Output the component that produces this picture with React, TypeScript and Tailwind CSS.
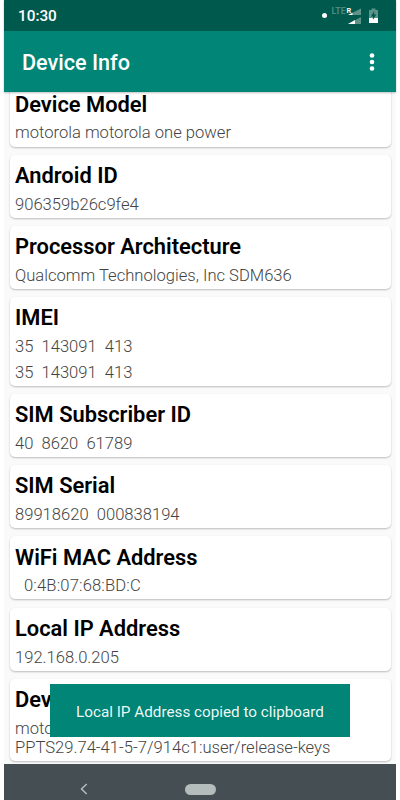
import { clsx } from "clsx";

type InfoItem = {
  title: string;
  lines: string[];
  cardClass?: string;
  bodyClass?: string;
};

const items: InfoItem[] = [
  { title: "Device Model", lines: ["motorola motorola one power"] },
  { title: "Android ID", lines: ["906359b26c9fe4"] },
  { title: "Processor Architecture", lines: ["Qualcomm Technologies, Inc SDM636"] },
  { title: "IMEI", lines: ["35  143091  413", "35  143091  413"], cardClass: "h-[88.4px]" },
  { title: "SIM Subscriber ID", lines: ["40  8620  61789"] },
  { title: "SIM Serial", lines: ["89918620  000838194"] },
  { title: "WiFi MAC Address", lines: ["0:4B:07:68:BD:C"], bodyClass: "pl-[9px] leading-[25.4px] tracking-[0.15px]" },
  { title: "Local IP Address", lines: ["192.168.0.205"] },
  {
    title: "Device Fingerprint",
    lines: ["motorola/chef/chef_sprout:9/", "PPTS29.74-41-5-7/914c1:user/release-keys"],
    cardClass: "h-[82px]",
    bodyClass: "pt-[3px] leading-[19.5px]",
  },
];

function InfoCard({ title, lines, cardClass = "h-[63px]", bodyClass = "leading-[25.4px]" }: InfoItem) {
  return (
    <div
      className={clsx(
        "shrink-0 rounded-[5px] bg-white px-[5.5px] pt-[6.2px] shadow-[0_1px_2px_rgba(0,0,0,0.25)]",
        cardClass,
      )}
    >
      <h2 className="text-[21.85px] leading-[30.8px] font-semibold text-black">{title}</h2>
      <div className={clsx("text-[16.6px] font-light whitespace-pre text-[#444]", bodyClass)}>
        {lines.map((line, i) => (
          <p key={i}>{line}</p>
        ))}
      </div>
    </div>
  );
}

function StatusIcons() {
  return (
    <svg width="80" height="31" viewBox="0 0 80 31" className="ml-auto">
      <circle cx="8.5" cy="15.5" r="2.5" fill="#fff" />
      <text x="15.5" y="14.4" fontSize="8.8" fontWeight="700" fill="#4d8a7f">
        LTE
      </text>
      <path d="M45 8.5V15H32z" fill="#5d9388" />
      <path d="M36.5 12.7V15H32z" fill="#fff" />
      <text x="30.5" y="12.6" fontSize="7.4" fontWeight="700" fill="#fff">
        R
      </text>
      <path d="M45 17V24H32z" fill="#5d9388" />
      <path d="M39 20V24H32z" fill="#fff" />
      <path d="M59.5 8.5V10H62v13h-9V10h2.500V8.500z" fill="#5d9388" />
      <path d="M53 18h9v5h-9z" fill="#fff" />
      <path d="M58.200 11l-3.300 5.600h2V20l3.300-5.600h-2z" fill="#00594d" />
    </svg>
  );
}

export default function App() {
  return (
    <div className="h-[800px] w-[400px] overflow-hidden bg-white px-1 font-['Roboto',sans-serif]">
      <div className="relative flex h-full flex-col bg-[#fafafa]">
        <header className="z-10 shrink-0 shadow-[0_1px_2px_rgba(0,0,0,0.25)]">
          <div className="flex h-[31px] items-center bg-[#00594d] pl-[14px]">
            <span className="pt-[2px] text-[15.3px] font-medium text-white">10:30</span>
            <StatusIcons />
          </div>
          <div className="flex h-[61px] items-center justify-between bg-[#008577] pr-[21px] pl-[18px]">
            <h1 className="pt-[3px] text-[21.6px] font-medium text-white">Device Info</h1>
            <svg width="6" height="20" viewBox="0 0 6 20" fill="#fff">
              <circle cx="3" cy="3.5" r="2.3" />
              <circle cx="3" cy="10" r="2.3" />
              <circle cx="3" cy="16.5" r="2.3" />
            </svg>
          </div>
        </header>
        <main className="-mt-[8.5px] flex min-h-0 flex-1 flex-col gap-[8.25px] overflow-hidden px-[5.5px]">
          {items.map((item) => (
            <InfoCard key={item.title} {...item} />
          ))}
        </main>
        <nav className="flex h-[36.5px] shrink-0 items-center bg-[#454e53] pt-[15px]">
          <svg width="8" height="12" viewBox="0 0 8 12" className="ml-[76px]">
            <path d="M6.7 1L1.5 6l5.2 5" fill="none" stroke="#b4bcbc" strokeWidth="1.5" />
          </svg>
          <div className="ml-[96.5px] h-[11px] w-[31px] rounded-full bg-[#b4bcbc]" />
        </nav>
        <div className="absolute top-[684px] left-[46px] z-20 flex h-[53px] w-[300px] items-center justify-center bg-[#008577] pt-[3px]">
          <span className="text-[15.25px] text-white/95">Local IP Address copied to clipboard</span>
        </div>
      </div>
    </div>
  );
}
